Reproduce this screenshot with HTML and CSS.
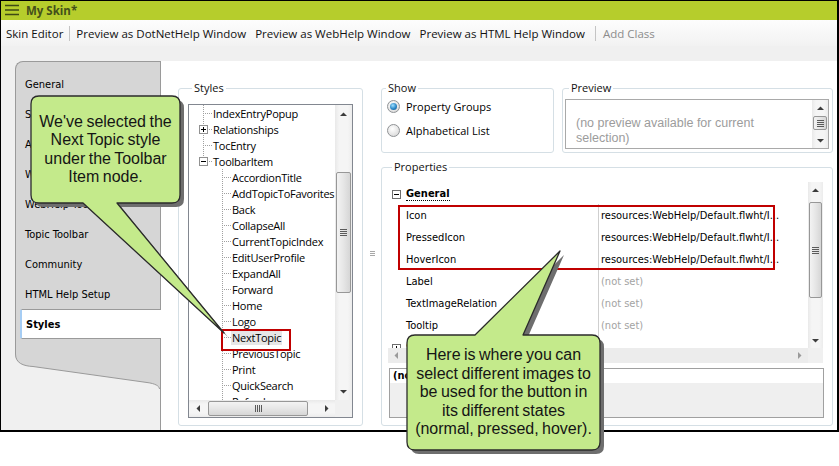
FILE: index.html
```html
<!DOCTYPE html>
<html>
<head>
<meta charset="utf-8">
<title>My Skin</title>
<link rel="stylesheet" href="styles.css">
</head>
<body>
<div class="window">
  <div class="titlebar">
    <svg class="menu-icon" width="14" height="17" viewBox="0 0 14 17"><path d="M0 3.5H14M0 8H14M0 12.5H14" stroke="#3f4a14" stroke-width="1.4"/></svg>
    <span class="title">My Skin*</span>
  </div>
  <div class="toolbar">
    <span class="tb-item">Skin Editor</span>
    <span class="tb-sep"></span>
    <span class="tb-item">Preview as DotNetHelp Window</span>
    <span class="tb-item">Preview as WebHelp Window</span>
    <span class="tb-item">Preview as HTML Help Window</span>
    <span class="tb-sep tb-sep-end"></span>
    <span class="tb-item disabled">Add Class</span>
  </div>
  <div class="body">
    <div class="tabs">
      <div class="tab-panel">
        <div class="tab">General</div>
        <div class="tab">Size</div>
        <div class="tab">Accessibility</div>
        <div class="tab">WebHelp Setup</div>
        <div class="tab">WebHelp Toolbar</div>
        <div class="tab">Topic Toolbar</div>
        <div class="tab">Community</div>
        <div class="tab">HTML Help Setup</div>
        <div class="tab selected">Styles</div>
      </div>
      <svg class="tab-curve" width="145" height="36" viewBox="0 0 145 36">
        <path d="M0 0 V1 C0 10 8 13 18 13.5 L132 29.5 C140 30.5 145 33 145 36 V0 Z" fill="#d6d6d6"/>
        <path d="M0.5 0 V1 C0.5 10 8 13 18 13.5 L132 29.5 C140 30.5 144.5 33 144.5 36" fill="none" stroke="#9a9a9a"/>
      </svg>
    </div>

    <div class="main">
      <fieldset class="group styles-group">
        <legend>Styles</legend>
        <div class="tree-box">
          <div class="tree-view">
            <div class="node r"><span class="lbl">IndexEntryPopup</span></div>
            <div class="node r x"><svg class="expander" width="9" height="9" viewBox="0 0 9 9"><rect x="0.5" y="0.5" width="8" height="8" fill="#fff" stroke="#919191"/><path d="M2 4.5H7M4.5 2V7" stroke="#000"/></svg><span class="lbl">Relationships</span></div>
            <div class="node r"><span class="lbl">TocEntry</span></div>
            <div class="node r x last"><svg class="expander" width="9" height="9" viewBox="0 0 9 9"><rect x="0.5" y="0.5" width="8" height="8" fill="#fff" stroke="#919191"/><path d="M2 4.5H7" stroke="#000"/></svg><span class="lbl">ToolbarItem</span></div>
            <div class="node c"><span class="lbl">AccordionTitle</span></div>
            <div class="node c"><span class="lbl">AddTopicToFavorites</span></div>
            <div class="node c"><span class="lbl">Back</span></div>
            <div class="node c"><span class="lbl">CollapseAll</span></div>
            <div class="node c"><span class="lbl">CurrentTopicIndex</span></div>
            <div class="node c"><span class="lbl">EditUserProfile</span></div>
            <div class="node c"><span class="lbl">ExpandAll</span></div>
            <div class="node c"><span class="lbl">Forward</span></div>
            <div class="node c"><span class="lbl">Home</span></div>
            <div class="node c"><span class="lbl">Logo</span></div>
            <div class="node c"><span class="lbl sel">NextTopic</span></div>
            <div class="node c"><span class="lbl">PreviousTopic</span></div>
            <div class="node c"><span class="lbl">Print</span></div>
            <div class="node c"><span class="lbl">QuickSearch</span></div>
            <div class="node c"><span class="lbl">Refresh</span></div>
          </div>
          <div class="vscroll">
            <div class="sb-btn"><svg width="7" height="4" viewBox="0 0 7 4"><path d="M0 4L3.5 0.5L7 4Z" fill="#3c3c3c"/></svg></div>
            <div class="sb-track"><div class="sb-thumb"><span class="grip-h"></span></div></div>
            <div class="sb-btn"><svg width="7" height="4" viewBox="0 0 7 4"><path d="M0 0L3.5 3.5L7 0Z" fill="#3c3c3c"/></svg></div>
          </div>
          <div class="hscroll">
            <div class="sb-btn"><svg width="4" height="7" viewBox="0 0 4 7"><path d="M4 0L0.5 3.5L4 7Z" fill="#3c3c3c"/></svg></div>
            <div class="sb-track"><div class="sb-thumb"><span class="grip-v"></span></div></div>
            <div class="sb-btn"><svg width="4" height="7" viewBox="0 0 4 7"><path d="M0 0L3.5 3.5L0 7Z" fill="#3c3c3c"/></svg></div>
          </div>
          <div class="corner"></div>
        </div>
      </fieldset>

      <div class="splitter"><span class="split-grip"></span></div>

      <div class="right-col">
        <div class="top-row">
          <fieldset class="group show-group">
            <legend>Show</legend>
            <div class="opts">
              <div class="opt"><span class="radio on"><span class="dot"></span></span><span>Property Groups</span></div>
              <div class="opt"><span class="radio"></span><span>Alphabetical List</span></div>
            </div>
          </fieldset>
          <fieldset class="group preview-group">
            <legend>Preview</legend>
            <div class="pv-box">
              <div class="pv-text">(no preview available for current<br>selection)</div>
              <div class="vscroll pv-scroll">
                <div class="sb-btn"><svg width="7" height="4" viewBox="0 0 7 4"><path d="M0 4L3.5 0.5L7 4Z" fill="#3c3c3c"/></svg></div>
                <div class="sb-track"><div class="sb-thumb"><span class="grip-h"></span></div></div>
                <div class="sb-btn"><svg width="7" height="4" viewBox="0 0 7 4"><path d="M0 0L3.5 3.5L7 0Z" fill="#3c3c3c"/></svg></div>
              </div>
            </div>
          </fieldset>
        </div>

        <fieldset class="group props-group">
          <legend>Properties</legend>
          <div class="pgrid">
            <div class="prows">
              <div class="cat"><svg class="expander" width="9" height="9" viewBox="0 0 9 9"><rect x="0.5" y="0.5" width="8" height="8" fill="#fff" stroke="#6d6d6d"/><path d="M2 4.5H7" stroke="#000"/></svg><span class="cat-name">General</span></div>
              <div class="prow"><span class="pl">Icon</span><span class="pv">resources:WebHelp/Default.flwht/I...</span></div>
              <div class="prow"><span class="pl">PressedIcon</span><span class="pv">resources:WebHelp/Default.flwht/I...</span></div>
              <div class="prow"><span class="pl">HoverIcon</span><span class="pv">resources:WebHelp/Default.flwht/I...</span></div>
              <div class="prow"><span class="pl">Label</span><span class="pv unset">(not set)</span></div>
              <div class="prow"><span class="pl">TextImageRelation</span><span class="pv unset">(not set)</span></div>
              <div class="prow"><span class="pl">Tooltip</span><span class="pv unset">(not set)</span></div>
              <div class="cat"><svg class="expander" width="9" height="9" viewBox="0 0 9 9"><rect x="0.5" y="0.5" width="8" height="8" fill="#fff" stroke="#6d6d6d"/><path d="M2 4.5H7M4.5 2V7" stroke="#000"/></svg><span class="cat-name">Style</span></div>
            </div>
            <div class="vscroll pg-scroll">
              <div class="sb-btn"><svg width="7" height="4" viewBox="0 0 7 4"><path d="M0 4L3.5 0.5L7 4Z" fill="#3c3c3c"/></svg></div>
              <div class="sb-track"><div class="sb-thumb"><span class="grip-h"></span></div></div>
              <div class="sb-btn"><svg width="7" height="4" viewBox="0 0 7 4"><path d="M0 0L3.5 3.5L7 0Z" fill="#3c3c3c"/></svg></div>
            </div>
            <div class="hscroll pg-hscroll">
              <div class="sb-btn"><svg width="4" height="7" viewBox="0 0 4 7"><path d="M4 0L0.5 3.5L4 7Z" fill="#9a9a9a"/></svg></div>
              <div class="sb-track"></div>
              <div class="sb-btn"><svg width="4" height="7" viewBox="0 0 4 7"><path d="M0 0L3.5 3.5L0 7Z" fill="#9a9a9a"/></svg></div>
            </div>
            <div class="corner"></div>
          </div>
          <div class="desc">
            <div class="desc-title">(none)</div>
            <div class="desc-body"></div>
          </div>
        </fieldset>
      </div>
    </div>
  </div>
</div>

<div class="annot annot-next"></div>
<div class="annot annot-icons"></div>

<svg class="callouts" width="839" height="466" viewBox="0 0 839 466">
  <path transform="translate(4 4)" fill="#6e6e6e" d="M39 96H172Q180 96 180 104V195Q180 203 172 203H117L224 333L83 203H39Q31 203 31 195V104Q31 96 39 96Z"/>
  <path fill="#c4ea8b" stroke="#2b2b2b" stroke-width="1.3" stroke-linejoin="round" d="M39 96H172Q180 96 180 104V195Q180 203 172 203H117L224 333L83 203H39Q31 203 31 195V104Q31 96 39 96Z"/>
  <path transform="translate(4 4)" fill="#6e6e6e" d="M415 335H475L560 251L523 335H592Q600 335 600 343V442Q600 450 592 450H415Q407 450 407 442V343Q407 335 415 335Z"/>
  <path fill="#c4ea8b" stroke="#2b2b2b" stroke-width="1.3" stroke-linejoin="round" d="M415 335H475L560 251L523 335H592Q600 335 600 343V442Q600 450 592 450H415Q407 450 407 442V343Q407 335 415 335Z"/>
</svg>
<div class="callout-text ct1">We've selected the<br>Next Topic style<br>under the Toolbar<br>Item node.</div>
<div class="callout-text ct2">Here is where you can<br>select different images to<br>be used for the button in<br>its different states<br>(normal, pressed, hover).</div>
</body>
</html>
```

FILE: styles.css
```css
* { box-sizing: border-box; }
html, body { margin: 0; padding: 0; background: #fff; }
body {
  position: relative;
  width: 839px;
  height: 466px;
  overflow: hidden;
  font-family: "Open Sans", "Liberation Sans", sans-serif;
  font-size: 11px;
  color: #000;
}

.window {
  width: 839px;
  height: 432px;
  border: 1px solid #000;
  border-right-width: 2px;
  border-bottom-width: 2px;
  background: #f0f0f0;
  display: flex;
  flex-direction: column;
}

/* title bar */
.titlebar {
  height: 19px;
  flex: none;
  background: #b6cd2c;
  display: flex;
  align-items: center;
  padding-left: 4px;
  gap: 7px;
}
.menu-icon { flex: none; }
.title {
  font-weight: 700;
  font-size: 11.5px;
  color: #44501a;
  line-height: 19px;
}

/* toolbar */
.toolbar {
  height: 26px;
  flex: none;
  display: flex;
  align-items: center;
  background: linear-gradient(#fdfdfd, #f2f2f2);
  font-size: 11.5px;
}
.tb-item { padding: 0 5px; white-space: nowrap; color: #111; }
.tb-item + .tb-item { padding-left: 4px; }
.tb-item.disabled { color: #8c8c8c; }
.tb-sep { width: 1px; height: 15px; background: #c4c4c4; margin: 0 1px; }
.tb-sep.tb-sep-end { margin: 0 2px 0 5px; }

/* body */
.body {
  flex: 1;
  min-height: 0;
  display: flex;
  padding-top: 15px;
}

/* left tabs */
.tabs {
  width: 159px;
  flex: none;
  padding-left: 14px;
  display: flex;
  flex-direction: column;
}
.tab-panel {
  background: #d6d6d6;
  border-left: 1px solid #9a9a9a;
  border-top: 1px solid #9a9a9a;
  border-top-left-radius: 8px;
  padding: 7px 0 14px 0;
}
.tab {
  height: 30px;
  display: flex;
  align-items: center;
  padding-left: 9px;
  font-family: "DejaVu Sans Condensed", "DejaVu Sans", sans-serif;
  font-size: 11px;
  white-space: nowrap;
}
.tab.selected {
  position: relative;
  z-index: 1;
  margin-left: 4px;
  margin-right: -1px;
  padding-left: 4px;
  background: #fff;
  border-top: 1px solid #9a9a9a;
  border-bottom: 1px solid #9a9a9a;
  border-left: 2px solid #a6cdf4;
  border-radius: 2px 0 0 2px;
  font-weight: 700;
}
.tab-curve { display: block; flex: none; }

/* main white area */
.main {
  flex: 1;
  min-width: 0;
  display: flex;
  background: #fff;
  border-left: 1px solid #9a9a9a;
  padding: 19px 3px 4px 17px;
}

.group {
  margin: 0;
  padding: 0;
  border: 1px solid #d5dfe5;
  border-radius: 3px;
  min-width: 0;
}
.group > legend {
  margin-left: 4px;
  padding: 0 2px;
  font-size: 11px;
  line-height: 16px;
  height: 16px;
  color: #111;
}

/* styles tree */
.styles-group {
  width: 185px;
  flex: none;
  padding: 8px 9px 7px 9px;
}
.tree-box {
  width: 165px;
  height: 314px;
  border: 1px solid #828790;
  display: grid;
  grid-template-columns: 146px 17px;
  grid-template-rows: 295px 17px;
  background: #fff;
}
.tree-view {
  overflow: hidden;
  padding-top: 0;
  font-size: 11px;
  letter-spacing: -0.25px;
}
.node {
  height: 16px;
  display: flex;
  align-items: center;
  white-space: nowrap;
}
.lbl { padding: 0 1px; line-height: 15px; }
.lbl.sel { background: #e6e6e6; }
.node.r {
  padding-left: 23px;
  background:
    repeating-linear-gradient(to right, #a0a0a0 0 1px, transparent 1px 2px) 16px 8px / 7px 1px no-repeat,
    repeating-linear-gradient(to bottom, #a0a0a0 0 1px, transparent 1px 2px) 14px 0 / 1px 16px no-repeat;
}
.node.r.x {
  padding-left: 10px;
  background:
    repeating-linear-gradient(to right, #a0a0a0 0 1px, transparent 1px 2px) 20px 8px / 3px 1px no-repeat,
    repeating-linear-gradient(to bottom, #a0a0a0 0 1px, transparent 1px 2px) 14px 0 / 1px 16px no-repeat;
}
.node.r.x.last {
  background:
    repeating-linear-gradient(to right, #a0a0a0 0 1px, transparent 1px 2px) 20px 8px / 3px 1px no-repeat,
    repeating-linear-gradient(to bottom, #a0a0a0 0 1px, transparent 1px 2px) 14px 0 / 1px 4px no-repeat;
}
.node.c {
  padding-left: 42px;
  background:
    repeating-linear-gradient(to right, #a0a0a0 0 1px, transparent 1px 2px) 35px 8px / 7px 1px no-repeat,
    repeating-linear-gradient(to bottom, #a0a0a0 0 1px, transparent 1px 2px) 33px 0 / 1px 16px no-repeat;
}
.expander { flex: none; display: block; margin-right: 4px; }

/* scrollbars */
.vscroll {
  display: flex;
  flex-direction: column;
  background: linear-gradient(to right, #e9e9e9, #f5f5f5 25%, #f5f5f5 75%, #ececec);
}
.hscroll {
  display: flex;
  background: linear-gradient(#e9e9e9, #f5f5f5 25%, #f5f5f5 75%, #ececec);
}
.sb-btn {
  flex: none;
  display: flex;
  align-items: center;
  justify-content: center;
}
.vscroll .sb-btn { height: 17px; }
.hscroll .sb-btn { width: 17px; }
.sb-track { flex: 1; display: flex; min-width: 0; min-height: 0; }
.vscroll .sb-track { flex-direction: column; }
.sb-thumb {
  border: 1px solid #979797;
  border-radius: 2px;
  display: flex;
  align-items: center;
  justify-content: center;
}
.vscroll .sb-thumb {
  margin: 0 1px;
  background: linear-gradient(to right, #f3f3f3, #e6e6e6 50%, #d6d6d6);
}
.hscroll .sb-thumb {
  margin: 1px 0;
  background: linear-gradient(#f3f3f3, #e6e6e6 50%, #d6d6d6);
}
.grip-h {
  width: 7px;
  height: 7px;
  background: repeating-linear-gradient(to bottom, #5a5a5a 0 1px, transparent 1px 2px);
}
.grip-v {
  width: 7px;
  height: 7px;
  background: repeating-linear-gradient(to right, #5a5a5a 0 1px, transparent 1px 2px);
}
.corner { background: #f0f0f0; }

.tree-box .vscroll .sb-thumb { margin-top: 50px; height: 121px; }
.tree-box .hscroll .sb-thumb { margin-left: 2px; width: 100px; }

/* splitter */
.splitter {
  width: 18px;
  flex: none;
  display: flex;
  align-items: center;
  justify-content: center;
}
.split-grip {
  width: 5px;
  height: 5px;
  background: repeating-linear-gradient(to bottom, #a8a8a8 0 1px, transparent 1px 2px);
}

/* right column */
.right-col {
  width: 452px;
  flex: none;
  display: flex;
  flex-direction: column;
}
.top-row {
  display: flex;
  gap: 8px;
  height: 73px;
  flex: none;
}
.show-group { width: 173px; flex: none; }
.opts {
  padding: 2px 0 0 5px;
  display: flex;
  flex-direction: column;
  gap: 8px;
}
.opt {
  height: 16px;
  display: flex;
  align-items: center;
  gap: 6px;
  white-space: nowrap;
}
.radio {
  width: 13px;
  height: 13px;
  flex: none;
  border-radius: 50%;
  border: 1px solid #8f9295;
  background: radial-gradient(circle at 40% 35%, #ffffff, #e4e4e4 60%, #cfcfcf);
  display: flex;
  align-items: center;
  justify-content: center;
}
.radio .dot {
  width: 7px;
  height: 7px;
  border-radius: 50%;
  background: radial-gradient(circle at 40% 35%, #9fe0ff, #2a86c6 55%, #184f80);
}

.preview-group {
  width: 271px;
  flex: none;
  padding: 3px 3px 3px 2px;
}
.pv-box {
  height: 50px;
  border: 1px solid #a9a9a9;
  display: flex;
  background: #fff;
}
.pv-text {
  flex: 1;
  padding: 16px 0 0 10px;
  font-family: "Liberation Sans", Arial, sans-serif;
  font-size: 12.5px;
  line-height: 15px;
  color: #9c9c9c;
  white-space: nowrap;
  overflow: hidden;
}
.pv-scroll { width: 16px; flex: none; }
.pv-scroll .sb-btn { height: 15px; }
.pv-scroll .sb-thumb { height: 14px; margin-top: 1px; }

/* properties */
.props-group {
  flex: 1;
  margin-top: 6px;
  padding: 7px 9px 7px 6px;
}
.pgrid {
  width: 435px;
  height: 181px;
  display: grid;
  grid-template-columns: 420px 15px;
  grid-template-rows: 166px 15px;
  background: #fff;
}
.prows {
  overflow: hidden;
  font-family: "DejaVu Sans Condensed", "DejaVu Sans", sans-serif;
  font-size: 11px;
}
.cat {
  height: 22px;
  display: flex;
  align-items: center;
  padding-left: 4px;
  padding-top: 2px;
}
.cat .expander { margin-right: 5px; }
.cat-name {
  font-weight: 700;
  line-height: 13px;
  border-bottom: 1px dotted #000;
}
.prow {
  height: 22px;
  display: grid;
  grid-template-columns: 210px 1fr;
}
.pl {
  padding-left: 18px;
  display: flex;
  align-items: center;
  white-space: nowrap;
}
.pv {
  border-left: 1px solid #cfcfcf;
  padding-left: 2px;
  display: flex;
  align-items: center;
  white-space: nowrap;
  overflow: hidden;
}
.pv.unset { color: #a3a3a3; }
.pg-scroll .sb-btn { height: 15px; }
.pg-scroll .sb-thumb { margin-top: 5px; height: 96px; }
.pg-hscroll { background: #ececec; }
.pg-hscroll .sb-btn { width: 16px; }

.desc {
  margin-top: 5px;
  margin-left: 1px;
  width: 435px;
  height: 50px;
  border: 1px solid #a0a0a0;
  display: flex;
  flex-direction: column;
}
.desc-title {
  height: 14px;
  background: #fff;
  padding-left: 3px;
  font-family: "DejaVu Sans Condensed", "DejaVu Sans", sans-serif;
  font-weight: 700;
  font-size: 11px;
  line-height: 14px;
}
.desc-body { flex: 1; background: #efefef; }

/* annotations overlay */
.annot {
  position: absolute;
  border: 2px solid #c00000;
}
.annot-next { left: 221px; top: 329px; width: 70px; height: 22px; }
.annot-icons { left: 398px; top: 205px; width: 377px; height: 65px; }

.callouts {
  position: absolute;
  left: 0;
  top: 0;
  pointer-events: none;
}
.callout-text {
  position: absolute;
  display: flex;
  align-items: center;
  justify-content: center;
  text-align: center;
  font-family: "Liberation Sans", Arial, sans-serif;
  font-size: 16px;
  line-height: 18.5px;
  color: #151515;
  word-spacing: -1px;
}
.ct1 { left: 31px; top: 96px; width: 149px; height: 107px; }
.ct2 { left: 407px; top: 335px; width: 193px; height: 115px; }
```
